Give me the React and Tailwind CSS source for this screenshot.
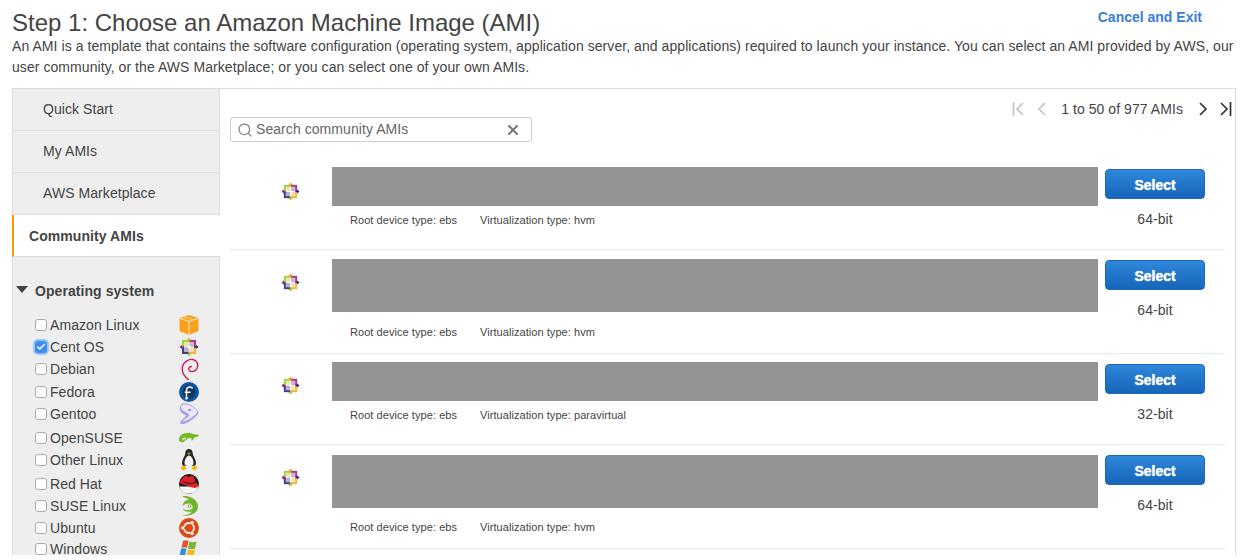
import React from 'react';
import { Search, X, Check } from 'lucide-react';

const CentOS = ({ size = 20 }) => (
  <svg width={size} height={size} viewBox="0 0 20 20">
    <path d="M10 .5l2 2.500v2H8V3z" fill="#efa724" />
    <path d="M19.500 10L17 12h-2V8h2z" fill="#262577" />
    <path d="M10 19.500L8 17v-2h4v2z" fill="#9ccd2a" />
    <path d="M.5 10L3 8h2v4H3z" fill="#932279" />
    <rect x="3" y="3" width="6.300" height="6.300" fill="#a8d23c" />
    <rect x="10.700" y="3" width="6.300" height="6.300" fill="#a33c8c" />
    <rect x="10.700" y="10.700" width="6.300" height="6.300" fill="#f3b440" />
    <rect x="3" y="10.700" width="6.300" height="6.300" fill="#3f3e8e" />
    <path d="M5 5h4.300v4.300H5zM10.700 5H15v4.300h-4.300zM10.700 10.700H15V15h-4.300zM5 10.700h4.300V15H5z" fill="#fff" fillOpacity="0.6" />
    <path d="M10 8.300l1.700 1.700-1.700 1.700L8.300 10z" fill="#fff" />
  </svg>
);

const Amazon = () => (
  <svg width="20" height="20" viewBox="0 0 20 20">
    <path d="M10 0l9.500 3v13L10 20 .5 16V3z" fill="#f9a11b" />
    <path d="M.5 3L10 6.500 19.500 3" fill="none" stroke="#fff" strokeWidth="0.800" />
    <path d="M10 6.500V20" stroke="#fff" strokeWidth="0.800" />
    <path d="M5 1.700l9.500 3.200" stroke="#fff" strokeWidth="0.500" />
  </svg>
);

const Debian = () => (
  <svg width="20" height="22" viewBox="0 0 20 22">
    <path d="M9.500 21.500C4.500 18 2.500 13.500 3.500 8.500 5 3.500 10 .8 14 1.500c4.500 1 5.500 5.500 4 9-1.500 3-5.500 4-7.500 2-1.500-1.500-.5-4 2-4" fill="none" stroke="#d70a53" strokeWidth="1.300" strokeLinecap="round" />
  </svg>
);

const Fedora = () => (
  <svg width="20" height="20" viewBox="0 0 20 20">
    <circle cx="10" cy="10" r="10" fill="#0b57a4" />
    <circle cx="10" cy="10" r="6.800" fill="#13395f" />
    <path d="M8.500 15.500c0 1-1 1.500-2 1 1 .2 1-.5 1-1.500V8.500c0-2.300 1.800-3.500 3.500-3.500 1.300 0 2.200.7 2.200 1.700M5.800 10.300h5.700" fill="none" stroke="#fff" strokeWidth="1.500" />
  </svg>
);

const Gentoo = () => (
  <svg width="22" height="24" viewBox="0 0 22 24">
    <path d="M4 .5c5-1.500 12 2.500 17 8.500 1.500 2-1.500 5.500-5.500 8.500-4 3-10 6.500-13.500 5.500-2-.8 0-3.500 3-6 2-2 3-3 2-4C3.500 12 .5 9.500.8 5.500c.1-2.500 1.200-4 3.200-5z" fill="#a7a1de" />
    <path d="M5 1.500c5-1 11 2.500 15 7.500 1 1.500-2 4-5.500 6.500-3 2.500-8 5-11 4.500 2-2.300 6.500-4.200 7.500-6.200.5-1.500-1-2.700-3-3.800-3.500-1-6-3-6-6 0-1.200 1-2 3-2.500z" fill="#e9e6fa" />
    <ellipse cx="11.500" cy="7.500" rx="1.800" ry="1.100" fill="#8f89cf" />
  </svg>
);

const OpenSuse = () => (
  <svg width="22" height="12" viewBox="0 0 22 12">
    <path d="M0 8c0-4 3-7 8-7.500 3-.3 6 0 8 1.500 2-.3 4 0 6 1-1 1.500-3 2.500-5 2.500l-2 3h-1.500l.5-2.500c-1.500.5-3 .5-4.500 0l-1 2.500H7l.5-3c-1-.2-2.500 0-3.500 1-.8 1-.3 2 .5 2 .8 0 1-1 .3-1.200.5-.8 2 0 1.800 1.200-.3 1.500-2 2.500-3.800 2C1 10.800 0 9.500 0 8z" fill="#73ba25" />
  </svg>
);

const Tux = () => (
  <svg width="20" height="22" viewBox="0 0 20 22">
    <path d="M10 0c2.700 0 3.700 2.300 3.700 4.500 0 2 2.800 5 3.300 9 .2 2-1 3.500-1.500 3.500H4.500C4 17 2.800 15.500 3 13.500c.5-4 3.300-7 3.300-9C6.300 2.300 7.300 0 10 0z" fill="#262626" />
    <path d="M10 6.500c2.200 0 4.500 4 4.500 7.500 0 2-2 3.500-4.500 3.500S5.500 16 5.500 14c0-3.500 2.300-7.500 4.500-7.500z" fill="#f4f4f4" />
    <path d="M8.300 4.300l1.700-.8 1.700.8-1.700 1.400z" fill="#e8a51b" />
    <path d="M1.500 18.500L5.500 16 7.500 20l-4 1.500zM18.500 18.500L14.500 16 12.500 20l4 1.500z" fill="#f2b50f" />
  </svg>
);

const RedHat = () => (
  <svg width="20" height="20" viewBox="0 0 20 20">
    <circle cx="10" cy="10" r="10" fill="#151515" />
    <path d="M.4 12.500h19.200A10 10 0 0 1 .4 12.500z" fill="#f5f5f5" />
    <path d="M.3 8L5 2.500c1.500-1.200 3.500-.3 5 .2 1.500 0 3-1.500 4.500-.5l2 6 3.200 2.500c-.4 2.300-2.700 3.600-5.200 3.100-3-.5-4-1.500-7-2.500S1.300 10 .3 8z" fill="#e01f26" />
    <path d="M4 7.500c3 1.500 8 3 12.500 1" fill="none" stroke="#151515" strokeWidth="1" />
  </svg>
);

const Suse = () => (
  <svg width="20" height="20" viewBox="0 0 20 20">
    <path d="M3 0c9-.5 16 4 16 10.500S12 20 3 20c4-.8 8-2 10-4.500-3 .5-7 .5-10-2.500 3 1 7 1.500 9 .5 2.500-1.500 2-4.500-.5-5.500-3-1-6 0-8 2C4 6 7 3.500 11 3.500 8 2.500 5 1.500 3 0z" fill="#6fb52c" />
    <circle cx="10.500" cy="10" r="1.400" fill="none" stroke="#6fb52c" strokeWidth="0.800" />
  </svg>
);

const Ubuntu = () => (
  <svg width="20" height="20" viewBox="0 0 20 20">
    <circle cx="10" cy="10" r="10" fill="#dd4814" />
    <circle cx="10" cy="10" r="5" fill="none" stroke="#fff" strokeWidth="1.800" />
    <circle cx="3.800" cy="10" r="1.900" fill="#fff" stroke="#dd4814" strokeWidth="0.600" />
    <circle cx="13.100" cy="4.600" r="1.900" fill="#fff" stroke="#dd4814" strokeWidth="0.600" />
    <circle cx="13.100" cy="15.400" r="1.900" fill="#fff" stroke="#dd4814" strokeWidth="0.600" />
  </svg>
);

const Windows = () => (
  <svg width="20" height="20" viewBox="0 0 20 20">
    <path d="M4 2c2-1 4-1 5.500 0L8 9c-1.500-1-3.500-1-5.500 0z" fill="#e2552c" />
    <path d="M10.500 2.500c2 1 4.500 1 7 0L16 9.500c-2.500 1-5 1-7 0z" fill="#7cb52a" />
    <path d="M2 10c2-1 4-1 5.500 0L6 17c-1.500-1-3.500-1-5.500 0z" fill="#2f8fd8" />
    <path d="M9 10.500c2 1 4.500 1 7 0L14.500 18c-2.500 1-5 1-7 0z" fill="#f5b81c" />
  </svg>
);

const osList = [
  { name: 'Amazon Linux', Icon: Amazon, row: 'mt-0' },
  { name: 'Cent OS', Icon: CentOS, row: 'mt-0', checked: true },
  { name: 'Debian', Icon: Debian, row: 'mt-0' },
  { name: 'Fedora', Icon: Fedora, row: 'mt-[1px]' },
  { name: 'Gentoo', Icon: Gentoo, row: 'mt-0' },
  { name: 'OpenSUSE', Icon: OpenSuse, row: 'mt-[2px]' },
  { name: 'Other Linux', Icon: Tux, row: 'mt-0' },
  { name: 'Red Hat', Icon: RedHat, row: 'mt-[2px]' },
  { name: 'SUSE Linux', Icon: Suse, row: 'mt-0' },
  { name: 'Ubuntu', Icon: Ubuntu, row: 'mt-0' },
  { name: 'Windows', Icon: Windows, row: '-mt-[1px]' },
];

const amiRows = [
  { virt: 'hvm', bits: '64-bit', row: 'h-[83px] mb-[9px]', bar: 'h-[39px]', gap: 'pt-[7px]', logo: 'pt-[15px]', btn: 'pt-[2px]', bitsGap: 'mt-[11px]' },
  { virt: 'hvm', bits: '64-bit', row: 'h-[95px] mb-[8px]', bar: 'h-[53px]', gap: 'pt-[13px]', logo: 'pt-[14px]', btn: 'pt-[1px]', bitsGap: 'mt-[11px]' },
  { virt: 'paravirtual', bits: '32-bit', row: 'h-[83px] mb-[10px]', bar: 'h-[39px]', gap: 'pt-[7px]', logo: 'pt-[14px]', btn: 'pt-[2px]', bitsGap: 'mt-[11px]' },
  { virt: 'hvm', bits: '64-bit', row: 'h-[94px]', bar: 'h-[53px]', gap: 'pt-[12px]', logo: 'pt-[13px]', btn: 'pt-0', bitsGap: 'mt-[11px]' },
];

function Tab({ label }) {
  return (
    <div className="h-[42px] flex items-center pl-[30px] bg-[#eeeeee] border-b border-[#dcdcdc] text-[#444444]">
      {label}
    </div>
  );
}

function AmiRow({ ami }) {
  return (
    <div className={`${ami.row} flex border-b border-[#e8e8e8]`}>
      <div className={`${ami.logo} w-[102px] flex justify-center pl-[19px]`}>
        <div className="h-5">
          <CentOS size={19} />
        </div>
      </div>
      <div className="w-[766px]">
        <div className={`${ami.bar} bg-[#949494]`}></div>
        <div className={`${ami.gap} pl-[18px] flex text-[11px] leading-[14px] tracking-[0.06px] text-[#444444]`}>
          <span className="w-[130px]">Root device type: ebs</span>
          <span>Virtualization type: {ami.virt}</span>
        </div>
      </div>
      <div className={`${ami.btn} w-[100px] ml-[7px] flex flex-col items-center`}>
        <button className="w-[100px] h-[30px] pt-[2px] rounded-[4px] border border-[#1b68b8] bg-gradient-to-b from-[#2f88db] to-[#1565ba] text-white font-bold text-[14px] tracking-normal [text-shadow:0_0_1px_#fff]">
          Select
        </button>
        <div className={`${ami.bitsGap} text-[14px] leading-[18px] text-[#444444]`}>{ami.bits}</div>
      </div>
    </div>
  );
}

export default function App() {
  return (
    <div className="h-[555px] overflow-hidden bg-white font-['Liberation_Sans',Arial,sans-serif] text-[14px] tracking-[0.065px] text-[#444444]">
      <div className="px-3 pt-[9px] h-[88px]">
        <div className="flex justify-between">
          <h1 className="text-[24px] leading-[27px] tracking-normal text-[#444444]">Step 1: Choose an Amazon Machine Image (AMI)</h1>
          <a className="font-bold text-[#3b7dd8] leading-[16px] mr-[39px] tracking-normal cursor-pointer">Cancel and Exit</a>
        </div>
        <p className="leading-[21px] w-[1230px]">
          An AMI is a template that contains the software configuration (operating system, application server, and applications) required to launch your instance. You can select an AMI provided by AWS, our user community, or the AWS Marketplace; or you can select one of your own AMIs.
        </p>
      </div>

      <div className="ml-3 mr-[17px] flex border border-[#dcdcdc] h-[600px]">
        <div className="w-[207px] shrink-0 bg-[#eeeeee] border-r border-[#dcdcdc]">
          <Tab label="Quick Start" />
          <Tab label="My AMIs" />
          <Tab label="AWS Marketplace" />
          <div className="h-[42px] -mr-px flex items-center pl-[15px] pt-[1px] bg-white border-l-2 border-l-[#ff9900] border-b border-b-[#dcdcdc] font-bold text-[#444444] relative -ml-px">
            Community AMIs
          </div>
          <div className="pl-[3px] pt-[26px] flex items-center font-bold">
            <span className="w-0 h-0 border-x-[6px] border-x-transparent border-t-[7px] border-t-[#444444] mb-[3px]"></span>
            <span className="ml-[7px] leading-[16px]">Operating system</span>
          </div>
          <div className="pt-[15px]">
            {osList.map((os) => (
              <div key={os.name} className={`${os.row} h-[22px] flex items-center pl-[22px]`}>
                <span
                  className={
                    os.checked
                      ? 'w-3 h-3 shrink-0 flex items-center justify-center rounded-[3px] bg-[#3d8df5] ring-2 ring-[#9cc6f7]'
                      : 'w-3 h-3 shrink-0 rounded-[3px] border border-[#aaaaaa] bg-white'
                  }
                >
                  {os.checked && <Check size={10} strokeWidth={3.500} color="#fff" />}
                </span>
                <span className="ml-[3px] w-[129px] text-[#444444]">{os.name}</span>
                <span className="w-5 flex justify-center">
                  <os.Icon />
                </span>
              </div>
            ))}
          </div>
        </div>

        <div className="flex-1 px-[10px]">
          <div className="h-[78px] relative">
            <div className="absolute right-[-7px] top-[11px] flex items-center h-[18px]">
              <svg width="12" height="16" viewBox="0 0 12 16" className="mr-[13px]" fill="none" stroke="#c4c4c4" strokeWidth="1.700">
                <path d="M1.500 1v14M11 2L5 8l6 6" />
              </svg>
              <svg width="10" height="16" viewBox="0 0 10 16" className="mr-[14px]" fill="none" stroke="#c4c4c4" strokeWidth="1.700">
                <path d="M8 2L2 8l6 6" />
              </svg>
              <span className="text-[#444444] mr-[15px]">1 to 50 of 977 AMIs</span>
              <svg width="10" height="16" viewBox="0 0 10 16" className="mr-[12px]" fill="none" stroke="#333333" strokeWidth="1.700">
                <path d="M2 2l6 6-6 6" />
              </svg>
              <svg width="12" height="16" viewBox="0 0 12 16" fill="none" stroke="#333333" strokeWidth="1.700">
                <path d="M1 2l6 6-6 6M10.500 1v14" />
              </svg>
            </div>
            <div className="absolute left-0 top-[28px] w-[302px] h-[25px] rounded-[3px] border border-[#cccccc] flex items-center">
              <Search size={16} color="#888888" strokeWidth={2} className="ml-[6px]" />
              <span className="ml-[3px] text-[#666666]">Search community AMIs</span>
              <X size={16} color="#777777" strokeWidth={3} className="absolute right-[10px]" />
            </div>
          </div>
          {amiRows.map((ami, i) => (
            <AmiRow key={i} ami={ami} />
          ))}
        </div>
      </div>
    </div>
  );
}
